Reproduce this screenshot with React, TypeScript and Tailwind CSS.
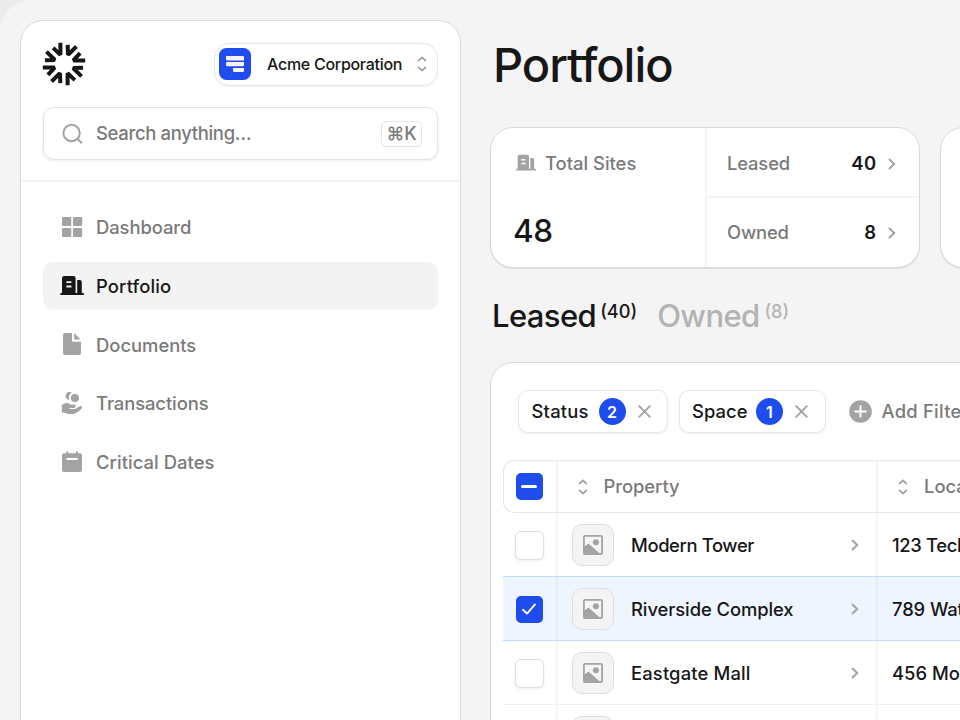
import React from "react";

type IconProps = { className?: string };

function Logo() {
  const turns = [0, 45, 90, 135, 180, 225, 270, 315];
  return (
    <svg className="size-11 shrink-0 -ml-px text-[#171717]" viewBox="-22 -22 44 44" fill="none" stroke="currentColor" strokeWidth="4">
      {turns.map((t) => (
        <path key={t} d="M-10.9 -16.1L-3.6 -9.3V-21.2" strokeLinejoin="bevel" transform={`rotate(${t})`} />
      ))}
    </svg>
  );
}

function BrandIcon() {
  return (
    <svg className="size-8 shrink-0" viewBox="0 0 32 32">
      <rect width="32" height="32" rx="7.5" fill="#1f4ded" />
      <path d="M7 8H24Q25 8 25 9V12.5H8.5Q7 12.5 7 11Z" fill="#fbf1f5" />
      <path d="M8.5 14H25V17Q25 18.3 23.5 18.3H8.5Q7 18.3 7 17V15.3Q7 14 8.5 14Z" fill="#fbf1f5" />
      <path d="M14 19.9H25V23Q25 24 24 24H15.6Q14 24 14 22.4Z" fill="#fbf1f5" />
    </svg>
  );
}

function UpDown({ className = "" }: IconProps) {
  return (
    <svg className={`h-4 w-2.5 shrink-0 text-[#a3a3a3] ${className}`} viewBox="0 0 10 16" fill="none" stroke="currentColor" strokeWidth="1.8">
      <path d="M1.2 5L5 1.4L8.8 5M1.2 11L5 14.6L8.8 11" />
    </svg>
  );
}

function Chevron({ className = "" }: IconProps) {
  return (
    <svg className={`h-3 w-2 shrink-0 text-[#a3a3a3] ${className}`} viewBox="0 0 8 12" fill="none" stroke="currentColor" strokeWidth="2" strokeLinecap="round">
      <path d="M1.5 1.5L6.2 6L1.5 10.5" />
    </svg>
  );
}

function Cross() {
  return (
    <svg className="size-[13px] shrink-0 text-[#a3a3a3]" viewBox="0 0 13 13" fill="none" stroke="currentColor" strokeWidth="1.9" strokeLinecap="round">
      <path d="M1.2 1.2L11.8 11.8M11.8 1.2L1.2 11.8" />
    </svg>
  );
}

function SearchIcon() {
  return (
    <svg className="size-[22px] shrink-0 text-[#a3a3a3]" viewBox="0 0 22 22" fill="none" stroke="currentColor" strokeWidth="2">
      <circle cx="10.6" cy="10" r="8.2" />
      <path d="M16.4 15.8L20.9 20.2" />
    </svg>
  );
}

function GridIcon() {
  return (
    <svg className="size-6 shrink-0" viewBox="0 0 24 24" fill="currentColor">
      <rect x="2" y="2" width="9.3" height="9" rx="1.3" />
      <rect x="12.9" y="2" width="9.3" height="9" rx="1.3" />
      <rect x="2" y="13" width="9.3" height="9" rx="1.3" />
      <rect x="12.9" y="13" width="9.3" height="9" rx="1.3" />
    </svg>
  );
}

function BuildingIcon({ className = "size-6" }: IconProps) {
  return (
    <svg className={`shrink-0 ${className}`} viewBox="0 0 24 24" fill="currentColor">
      <path
        fillRule="evenodd"
        d="M4.2 2H13.5Q15.6 2 15.6 4V19.4H2V4.2Q2 2 4.2 2ZM6.4 7.2V9H11.4V7.2ZM6.4 11.6V13.4H11.4V11.6Z"
      />
      <path d="M17.2 6H19.6Q21.8 6 21.8 8V19.4H17.2Z" />
      <rect x="0.2" y="19" width="23.8" height="2.1" rx="0.8" />
    </svg>
  );
}

function DocumentIcon() {
  return (
    <svg className="size-6 shrink-0" viewBox="0 0 24 24" fill="currentColor">
      <path d="M5 .9H12V9.1Q12 9.8 12.7 9.8H21V21.3Q21 23 19.3 23H5Q3 23 3 21.2V2.7Q3 .9 5 .9Z" />
      <path d="M14.2 1L20.5 7.6H14.2Z" />
    </svg>
  );
}

function HandCoinsIcon() {
  return (
    <svg className="size-6 shrink-0" viewBox="0 0 24 24" fill="currentColor">
      <circle cx="14.9" cy="7" r="4.1" />
      <path d="M9.2 .8A4.1 4.1 0 0 0 7 8Q7.9 8.8 9.3 8.7A6 6 0 0 1 11.6 1.8Q10.5 .7 9.2 .8Z" />
      <path d="M1.8 13.9Q6.8 10.3 10.3 13.4H13.5Q16 13.6 15.8 15.4Q15.5 16.9 13 16.9H9.6V18.1H13.4Q15.7 17.9 17.5 16.4Q20.6 13.8 22 15.7Q22.6 17.5 18.4 20.4Q14.4 23.1 10.8 23.1Q8 23 6.2 22.2Q4.4 21.4 1.8 21.6Z" />
    </svg>
  );
}

function CalendarIcon() {
  return (
    <svg className="size-6 shrink-0" viewBox="0 0 24 24" fill="currentColor">
      <path
        fillRule="evenodd"
        d="M6.3 1.5H8.3V3.3H15.9V1.5H17.9V3.3H20.2Q22 3.3 22 5.1V20.3Q22 22.1 20.2 22.1H3.8Q2 22.1 2 20.3V5.1Q2 3.3 3.8 3.3H6.3ZM7.2 8Q6.3 8 6.3 9T7.2 10H17Q17.9 10 17.9 9T17 8Z"
      />
    </svg>
  );
}

function ImageIcon() {
  return (
    <svg className="size-5 shrink-0 text-[#a3a3a3]" viewBox="0 0 20 20" fill="currentColor">
      <rect x=".9" y=".9" width="18.2" height="18.2" rx="1.2" fill="none" stroke="currentColor" strokeWidth="1.8" />
      <circle cx="12.9" cy="7.2" r="3" />
      <path d="M1 11.8L4.6 9.2Q5.6 8.5 6.6 9.4L17.3 19H1Z" />
    </svg>
  );
}

function PlusCircle() {
  return (
    <svg className="size-[23px] shrink-0" viewBox="0 0 23 23">
      <circle cx="11.5" cy="11.5" r="11.3" fill="#a3a3a3" />
      <path d="M11.5 6.2V16.8M6.2 11.5H16.8" stroke="#fff" strokeWidth="1.9" strokeLinecap="round" />
    </svg>
  );
}

const navItems = [
  { label: "Dashboard", icon: <GridIcon />, tracking: "tracking-[-0.06px]" },
  { label: "Portfolio", icon: <BuildingIcon />, tracking: "tracking-[0.15px]", active: true },
  { label: "Documents", icon: <DocumentIcon />, tracking: "tracking-[0px]" },
  { label: "Transactions", icon: <HandCoinsIcon />, tracking: "tracking-[-0.08px]" },
  { label: "Critical Dates", icon: <CalendarIcon />, tracking: "tracking-[0.06px]" },
];

function Sidebar() {
  return (
    <aside className="mt-5 ml-5 flex h-[760px] w-[441px] shrink-0 flex-col rounded-[23px] border border-[#dadada] bg-white">
      <div className="flex h-[161px] flex-col justify-between border-b-2 border-[#f5f5f5] px-[22px] pt-[21px] pb-5">
        <div className="flex items-center justify-between">
          <Logo />
          <button className="flex h-[43px] w-[224px] items-center rounded-[15px] border border-[#e6e6e6] bg-white pr-2.5 pl-[4px] shadow-[0_1px_2px_rgba(0,0,0,0.06)]">
            <BrandIcon />
            <span className="ml-4 text-[16px] font-medium tracking-[-0.28px] whitespace-nowrap text-[#171717]">Acme Corporation</span>
            <UpDown className="ml-auto" />
          </button>
        </div>
        <div className="flex h-[53px] items-center rounded-[11px] border border-[#e4e4e4] bg-white pr-[15px] pl-[17px] shadow-[0_1px_3px_rgba(0,0,0,0.08)]">
          <SearchIcon />
          <span className="ml-[13px] text-[18.5px] font-[450] tracking-[-0.35px] whitespace-nowrap text-[#7a7a7a]">Search anything…</span>
          <span className="ml-auto flex h-[26px] w-[41px] items-center justify-center rounded-[5px] border border-[#e4e4e4] text-[18px] font-[450] whitespace-nowrap text-[#7a7a7a]">
            ⌘K
          </span>
        </div>
      </div>
      <nav className="flex flex-col gap-[10.8px] px-[22px] pt-[21px]">
        {navItems.map((n) => (
          <a
            key={n.label}
            className={`flex h-[47.9px] items-center gap-3 rounded-[10px] pl-[17px] text-[18.4px] ${
              n.active ? "bg-[#f3f3f3] font-medium text-[#171717]" : "font-[450] text-[#a3a3a3]"
            }`}
          >
            {n.icon}
            <span className={`pt-[2px] ${n.tracking} ${n.active ? "" : "text-[#7a7a7a]"}`}>{n.label}</span>
          </a>
        ))}
      </nav>
    </aside>
  );
}

function SplitRow({ label, value, className }: { label: string; value: string; className: string }) {
  return (
    <div className={`flex items-center pr-[23px] pl-5 text-[18.4px] ${className}`}>
      <span className="font-[450] tracking-[-0.15px] text-[#7a7a7a]">{label}</span>
      <span className="ml-auto font-semibold tracking-[0.4px] text-[#171717]">{value}</span>
      <Chevron className="ml-[11.5px]" />
    </div>
  );
}

type ChipProps = { label: string; count: string; className: string; tracking: string };

function FilterChip({ label, count, className, tracking }: ChipProps) {
  return (
    <div className={`flex h-[43px] items-center rounded-[10px] border border-[#e6e6e6] bg-white pr-[16.5px] pl-[12.5px] shadow-[0_1px_3px_rgba(0,0,0,0.07)] ${className}`}>
      <span className={`text-[18.4px] font-medium text-[#171717] ${tracking}`}>{label}</span>
      <span className="ml-auto flex size-[27px] items-center justify-center rounded-full bg-[#1f4ded] text-[16px] font-semibold text-white">{count}</span>
      <span className="ml-3 flex">
        <Cross />
      </span>
    </div>
  );
}

function Checkbox({ checked }: { checked?: boolean }) {
  if (!checked) {
    return <span className="mt-px size-[29px] rounded-[6px] border border-[#dedede] bg-white shadow-[0_1px_3px_rgba(0,0,0,0.08)]" />;
  }
  return (
    <span className="mt-px flex size-[27px] items-center justify-center rounded-[5px] bg-[#1f4ded]">
      <svg className="size-4" viewBox="0 0 16 16" fill="none" stroke="#fff" strokeWidth="1.9" strokeLinecap="round" strokeLinejoin="round">
        <path d="M2 8.8L6 12.6L14 3.4" />
      </svg>
    </span>
  );
}

const rows = [
  { name: "Modern Tower", location: "123 Tech Park", nameTracking: "tracking-[-0.38px]", placeTracking: "tracking-[-0.35px]" },
  { name: "Riverside Complex", location: "789 Water St", nameTracking: "tracking-[-0.08px]", placeTracking: "tracking-[-0.1px]", selected: true },
  { name: "Eastgate Mall", location: "456 Montgomery", nameTracking: "tracking-[0.15px]", placeTracking: "tracking-[0px]" },
  { name: "Harbor Plaza", location: "321 Harbor Ln", nameTracking: "tracking-[0px]", placeTracking: "tracking-[0px]" },
];

function PropertyTable() {
  return (
    <div className="mt-[27px] ml-[11.5px]">
      <div className="flex h-[53px] rounded-l-[11px] border border-r-0 border-[#e6e6e6] text-[18.4px] font-[450] text-[#7a7a7a]">
        <div className="flex w-[54px] items-center justify-center border-r-2 border-[#f4f4f4] pr-px">
          <span className="flex size-[27px] items-center justify-center rounded-[5px] bg-[#1f4ded]">
            <span className="h-[3px] w-4 rounded-full bg-white" />
          </span>
        </div>
        <div className="flex w-[320px] items-center border-r-2 border-[#f4f4f4] pl-5">
          <UpDown />
          <span className="ml-4 tracking-[-0.05px]">Property</span>
        </div>
        <div className="flex flex-1 items-center pl-[20.5px]">
          <UpDown />
          <span className="ml-4">Location</span>
        </div>
      </div>
      {rows.map((r, i) => (
        <div
          key={r.name}
          className={`flex h-16 border-b text-[18.4px] font-medium text-[#171717] ${
            r.selected ? "border-[#bedbff] bg-[#eff5ff]" : i === 0 ? "border-[#bedbff]" : "border-[#f0f0f0]"
          }`}
        >
          <div className="flex w-[55px] items-center justify-center border-r-2 border-black/[0.04]">
            <Checkbox checked={r.selected} />
          </div>
          <div className="flex w-[320px] items-center border-r-2 border-black/[0.04] pr-[16.5px] pl-[14.5px]">
            <span className="flex size-[42px] items-center justify-center rounded-[10px] border border-[#dedede] bg-[#f4f4f4]">
              <ImageIcon />
            </span>
            <span className={`ml-[17px] pt-[2px] whitespace-nowrap ${r.nameTracking}`}>{r.name}</span>
            <Chevron className="ml-auto" />
          </div>
          <div className="flex flex-1 items-center pt-[2px] pl-[14.5px]">
            <span className={`whitespace-nowrap ${r.placeTracking}`}>{r.location}</span>
          </div>
        </div>
      ))}
    </div>
  );
}

function Main() {
  return (
    <main className="flex w-[739px] shrink-0 flex-col pl-[29px]">
      <h1 className="mt-[35px] ml-[3px] text-[47px] leading-[60px] font-medium tracking-[-1.05px] text-[#171717]">Portfolio</h1>
      <div className="mt-[32px] flex gap-5">
        <section className="flex h-[141px] w-[430px] shrink-0 rounded-[23px] border border-[#d9d9d9] bg-white shadow-[0_1px_1px_rgba(0,0,0,0.1)]">
          <div className="flex w-[216px] flex-col justify-between border-r-2 border-[#f5f5f5] pt-[21px] pb-[18px] pl-[22px]">
            <div className="flex items-center text-[#a3a3a3]">
              <BuildingIcon className="ml-[3px] size-5" />
              <span className="ml-[9px] text-[18.4px] leading-7 font-[450] tracking-[0px] text-[#7a7a7a]">Total Sites</span>
            </div>
            <span className="text-[31.5px] leading-9 font-medium tracking-[-0.4px] text-[#171717]">48</span>
          </div>
          <div className="flex flex-1 flex-col">
            <SplitRow label="Leased" value="40" className="h-[68px] pt-[3px]" />
            <div className="h-[2px] shrink-0 bg-[#f5f5f5]" />
            <SplitRow label="Owned" value="8" className="h-[69px] pt-px" />
          </div>
        </section>
        <section className="h-[141px] w-[430px] shrink-0 rounded-[23px] border border-[#d9d9d9] bg-white shadow-[0_1px_1px_rgba(0,0,0,0.1)]" />
      </div>
      <div className="mt-[28px] ml-[2px] flex h-10 text-[31px] leading-10">
        <span className="font-medium tracking-[-0.6px] text-[#171717]">Leased</span>
        <span className="ml-1 text-[18.2px] leading-[31px] font-medium text-[#171717]">(40)</span>
        <span className="ml-[20px] font-[450] tracking-[-0.65px] text-[#b3b3b3]">Owned</span>
        <span className="ml-[5px] text-[18px] leading-[31px] font-medium text-[#b3b3b3]">(8)</span>
      </div>
      <section className="mt-[26px] h-[400px] rounded-tl-[23px] border border-[#dadada] bg-white">
        <div className="mt-[27px] ml-[27px] flex items-center">
          <FilterChip label="Status" count="2" className="w-[150px]" tracking="tracking-[0.2px]" />
          <FilterChip label="Space" count="1" className="ml-[10.5px] w-[147px]" tracking="tracking-[0.05px]" />
          <div className="ml-[23px] flex items-center whitespace-nowrap">
            <PlusCircle />
            <span className="ml-2.5 text-[18.4px] font-[450] tracking-[0.25px] text-[#7a7a7a]">Add Filter</span>
          </div>
        </div>
        <PropertyTable />
      </section>
    </main>
  );
}

export default function App() {
  return (
    <div className="h-[720px] w-[960px] overflow-hidden bg-[#ebebeb] font-['Inter','Liberation_Sans',sans-serif]">
      <div className="flex h-[780px] w-[1200px] rounded-tl-[32px] bg-[#f4f4f4]">
        <Sidebar />
        <Main />
      </div>
    </div>
  );
}
